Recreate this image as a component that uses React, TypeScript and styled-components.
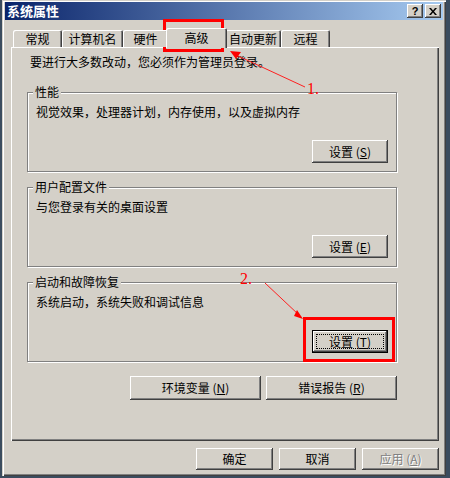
import React from 'react';
import styled, { createGlobalStyle } from 'styled-components';

const GlobalStyle = createGlobalStyle`
  html, body {
    margin: 0;
    padding: 0;
  }
  body {
    width: 450px;
    height: 478px;
    overflow: hidden;
    background: #3b4c5e;
    font-family: "Noto Sans CJK SC", "Liberation Sans", sans-serif;
    font-size: 12px;
    color: #000;
  }
`;

const tabs = [
  { label: '常规', w: 49 },
  { label: '计算机名', w: 61 },
  { label: '硬件', w: 45 },
  { label: '高级', w: 57, active: true },
  { label: '自动更新', w: 56 },
  { label: '远程', w: 49 },
];

const groups = [
  { title: '性能', desc: '视觉效果，处理器计划，内存使用，以及虚拟内存', key: 'S' },
  { title: '用户配置文件', desc: '与您登录有关的桌面设置', key: 'E' },
  { title: '启动和故障恢复', desc: '系统启动，系统失败和调试信息', key: 'T', focused: true },
];

const bevel = `
  box-shadow: inset -1px -1px 0 #404040, inset 1px 1px 0 #ffffff,
    inset -2px -2px 0 #808080, inset 2px 2px 0 #d4d0c8;
`;

export default function App() {
  return (
    <>
      <GlobalStyle />
      <Page>
        <Window>
          <TitleBar>
            <TitleText>系统属性</TitleText>
            <TitleButtons>
              <CaptionButton>?</CaptionButton>
              <CaptionButton>
                <svg width="8" height="7" viewBox="0 0 8 7">
                  <path d="M0 0h2l2 2.5L6 0h2L5 3.5 8 7H6L4 4.5 2 7H0l3-3.5z" fill="#000" />
                </svg>
              </CaptionButton>
            </TitleButtons>
          </TitleBar>

          <Body>
            <TabStrip>
              {tabs.map((t) => (
                <Tab key={t.label} $w={t.w} $active={!!t.active}>
                  {t.label}
                </Tab>
              ))}
            </TabStrip>

            <Panel>
              <Info>要进行大多数改动，您必须作为管理员登录。</Info>

              {groups.map((g, i) => (
                <Group key={g.title} $first={i === 0}>
                  <Legend>{g.title}</Legend>
                  <Desc>{g.desc}</Desc>
                  <ButtonRow>
                    <Button $w={76} $h={23} $focused={!!g.focused}>
                      <span>
                        设置 (<u>{g.key}</u>)
                      </span>
                    </Button>
                  </ButtonRow>
                </Group>
              ))}

              <EnvRow>
                <Button $w={131} $h={24}>
                  <span>
                    环境变量 (<u>N</u>)
                  </span>
                </Button>
                <Button $w={131} $h={24}>
                  <span>
                    错误报告 (<u>R</u>)
                  </span>
                </Button>
              </EnvRow>
            </Panel>

            <DialogButtons>
              <Button $w={77} $h={22}>确定</Button>
              <Button $w={77} $h={22}>取消</Button>
              <Button $w={77} $h={22} $disabled>
                <span>
                  应用 (<u>A</u>)
                </span>
              </Button>
            </DialogButtons>
          </Body>
        </Window>

        <Annotations width="450" height="478" viewBox="0 0 450 478">
          <rect x="164.5" y="20.5" width="58" height="30" fill="none" stroke="#ff0000" strokeWidth="3" />
          <line x1="305" y1="87" x2="236" y2="55" stroke="#ff2020" strokeWidth="1" />
          <path d="M230 51 L241 52 L236 59 Z" fill="#ff0000" />
          <text x="307" y="94" fill="#ff0000" fontFamily="Liberation Serif, serif" fontSize="16">1.</text>

          <rect x="304.5" y="318.5" width="89" height="42" fill="none" stroke="#ff0000" strokeWidth="3" />
          <line x1="265" y1="283" x2="299" y2="315" stroke="#ff2020" strokeWidth="1" />
          <path d="M303 319 L297 310 L294 316 Z" fill="#ff0000" />
          <text x="240" y="284" fill="#ff0000" fontFamily="Liberation Serif, serif" fontSize="16">2.</text>
        </Annotations>
      </Page>
    </>
  );
}

const Page = styled.div`
  position: relative;
  width: 450px;
  height: 478px;
  padding-left: 2px;
  box-sizing: border-box;
`;

const Window = styled.div`
  width: 444px;
  height: 476px;
  box-sizing: border-box;
  padding: 2px 3px;
  background: #d4d0c8;
  box-shadow: inset 1px 1px 0 #d4d0c8, inset 2px 2px 0 #ffffff,
    inset -1px -1px 0 #404040, inset -2px -2px 0 #808080;
  display: flex;
  flex-direction: column;
`;

const TitleBar = styled.div`
  height: 18px;
  display: flex;
  align-items: center;
  padding: 0 2px 0 2px;
  background: linear-gradient(to right, #0a246a, #a6caf0);
`;

const TitleText = styled.div`
  color: #fff;
  font-weight: bold;
  font-size: 13px;
  line-height: 16px;
`;

const TitleButtons = styled.div`
  margin-left: auto;
  display: flex;
  gap: 2px;
`;

const CaptionButton = styled.div`
  width: 16px;
  height: 14px;
  background: #d4d0c8;
  ${bevel}
  display: flex;
  align-items: center;
  justify-content: center;
  font-family: "Liberation Sans", sans-serif;
  font-weight: bold;
  font-size: 11px;
  line-height: 14px;
`;

const Body = styled.div`
  padding: 8px 4px 0 6px;
  display: flex;
  flex-direction: column;
`;

const TabStrip = styled.div`
  height: 20px;
  display: flex;
  align-items: flex-end;
  padding-left: 2px;
  margin-bottom: -1px;
  position: relative;
  z-index: 1;
`;

const Tab = styled.div<{ $w: number; $active: boolean }>`
  box-sizing: border-box;
  width: ${(p) => (p.$active ? p.$w + 4 : p.$w)}px;
  height: ${(p) => (p.$active ? 20 : 17)}px;
  margin: ${(p) => (p.$active ? '0 -2px' : '0 0 1px 0')};
  padding-top: ${(p) => (p.$active ? 3 : 2)}px;
  position: relative;
  z-index: ${(p) => (p.$active ? 2 : 1)};
  background: #d4d0c8;
  border-radius: 2px 2px 0 0;
  box-shadow: inset 1px 1px 0 #ffffff, inset -1px 0 0 #404040, inset -2px 0 0 #808080;
  text-align: center;
  line-height: 14px;
  white-space: nowrap;
`;

const Panel = styled.div`
  box-sizing: border-box;
  width: 428px;
  height: 394px;
  padding: 8px 0 0 16px;
  background: #d4d0c8;
  box-shadow: inset 1px 1px 0 #ffffff, inset -1px -1px 0 #404040, inset -2px -2px 0 #808080;
`;

const Info = styled.div`
  padding-left: 3px;
  line-height: 14px;
`;

const Group = styled.fieldset<{ $first: boolean }>`
  box-sizing: border-box;
  width: 370px;
  margin: ${(p) => (p.$first ? 16 : 8)}px 0 0 0;
  padding: 0 8px 8px 8px;
  min-inline-size: 0;
  border: 1px solid #808080;
  box-shadow: inset 1px 1px 0 #ffffff, 1px 1px 0 #ffffff;
`;

const Legend = styled.legend`
  padding: 0 2px;
  margin-left: -3px;
  line-height: 14px;
  background: #d4d0c8;
`;

const Desc = styled.div`
  margin-top: 6px;
  line-height: 14px;
`;

const ButtonRow = styled.div`
  display: flex;
  justify-content: flex-end;
  margin-top: 21px;
`;

const Button = styled.div<{ $w: number; $h: number; $focused?: boolean; $disabled?: boolean }>`
  box-sizing: border-box;
  width: ${(p) => p.$w}px;
  height: ${(p) => p.$h}px;
  position: relative;
  display: flex;
  align-items: center;
  justify-content: center;
  background: #d4d0c8;
  line-height: 14px;
  white-space: nowrap;
  color: ${(p) => (p.$disabled ? '#808080' : '#000')};
  text-shadow: ${(p) => (p.$disabled ? '1px 1px 0 #ffffff' : 'none')};
  ${(p) =>
    p.$focused
      ? `box-shadow: inset 0 0 0 1px #000, inset -2px -2px 0 #404040, inset 2px 2px 0 #ffffff,
          inset -3px -3px 0 #808080;`
      : bevel}

  &::after {
    content: '';
    display: ${(p) => (p.$focused ? 'block' : 'none')};
    position: absolute;
    inset: 4px;
    border: 1px dotted #000;
  }

  u {
    text-decoration-thickness: 1px;
    text-underline-offset: 1px;
  }
`;

const EnvRow = styled.div`
  width: 370px;
  display: flex;
  justify-content: flex-end;
  gap: 5px;
  margin-top: 14px;
`;

const DialogButtons = styled.div`
  display: flex;
  justify-content: flex-end;
  gap: 6px;
  margin-top: 7px;
`;

const Annotations = styled.svg`
  position: absolute;
  top: 0;
  left: 0;
  pointer-events: none;
`;
